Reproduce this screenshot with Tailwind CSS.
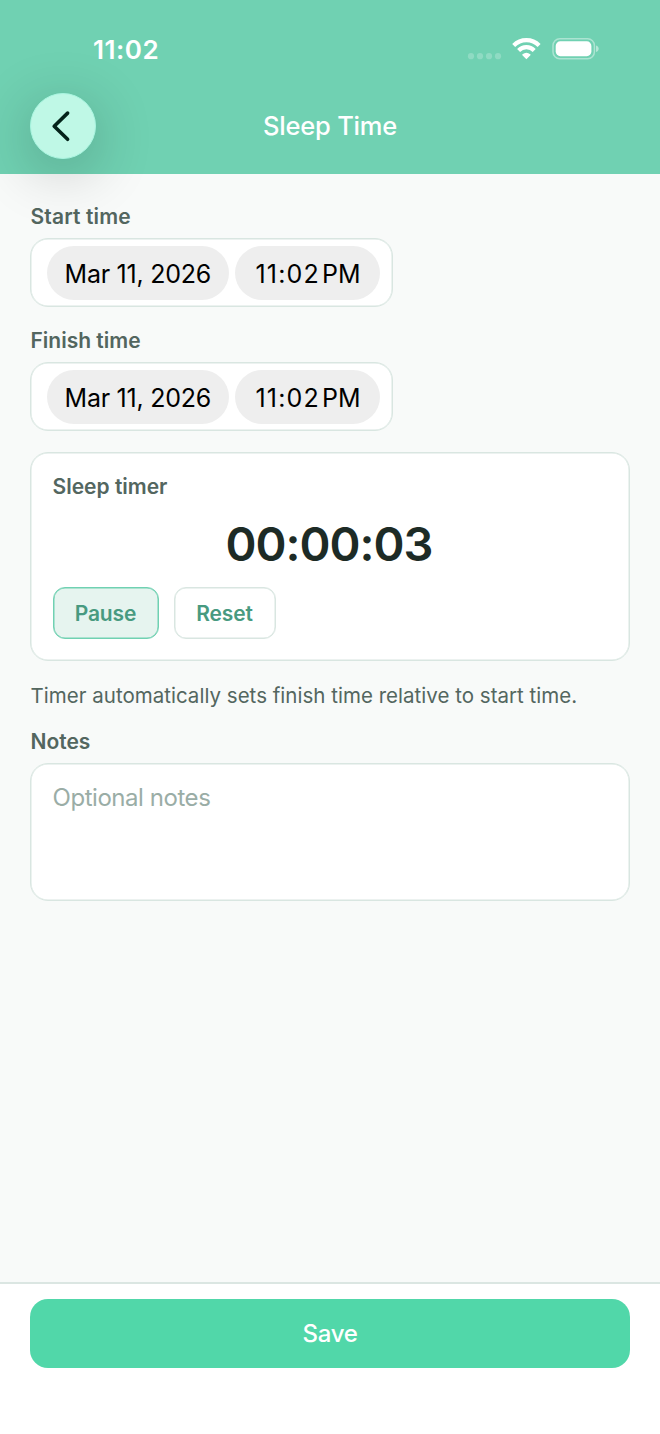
<!DOCTYPE html>
<html lang="en">
<head>
<meta charset="utf-8">
<title>Sleep Time</title>
<script src="https://cdn.jsdelivr.net/npm/@tailwindcss/browser@4"></script>
</head>
<body class="font-['Inter',sans-serif]">
<div class="flex h-[1434px] w-[660px] flex-col overflow-hidden bg-[#f8faf9]">
  <header class="relative z-10 flex h-[174px] flex-col bg-[#70d1b2] text-white">
    <div class="flex h-[93px] items-center justify-between pt-[4px] pr-[61px] pl-[93px]">
      <span class="pt-[2px] text-[26px] font-semibold tracking-[0.5px]">11:02</span>
      <svg class="h-[24px] w-[132px]" viewBox="0 0 132 24" fill="none">
        <g fill="#fff" fill-opacity=".22"><circle cx="4" cy="19.2" r="3.1"/><circle cx="13" cy="19.2" r="3.1"/><circle cx="22" cy="19.2" r="3.1"/><circle cx="31" cy="19.2" r="3.1"/></g>
        <g stroke="#fff" stroke-width="4.2"><path d="M46.7 8.5a17.8 17.8 0 0 1 25.4 0"/><path d="M51.6 13.4a11 11 0 0 1 15.6 0"/></g>
        <path d="M59.4 22.2 55.4 18.2Q55 17.7 55.5 17.3a6 6 0 0 1 7.8 0Q63.8 17.7 63.4 18.2Z" fill="#fff"/>
        <rect x="86" y="1.7" width="41.4" height="20" rx="6.8" stroke="#fff" stroke-opacity=".42" stroke-width="1.5"/>
        <rect x="88.7" y="4.3" width="35.7" height="14.9" rx="4.6" fill="#fff"/>
        <path d="M129 8.5c3.6 1.2 3.6 5.3 0 6.5Z" fill="#fff" fill-opacity=".48"/>
      </svg>
    </div>
    <div class="grid h-[66px] grid-cols-[66px_1fr_66px] items-center px-[30px]">
      <button class="flex size-[66px] items-center justify-center rounded-full border border-[#a9f5e0] bg-[#bff8e6] shadow-[0_12px_60px_rgba(0,0,0,0.24)]">
        <svg class="size-[32px]" viewBox="0 0 32 32" fill="none" stroke="#04231a" stroke-width="3.6" stroke-linecap="round" stroke-linejoin="round"><path d="M20.6 3.1 7.2 16.2l13.4 13.1"/></svg>
      </button>
      <h1 class="text-center text-[25.5px] leading-[30px] font-medium tracking-[-0.2px]">Sleep Time</h1>
    </div>
  </header>

  <main class="flex flex-1 flex-col px-[30px] pt-[30px] text-[#53665f]">
    <label class="h-[26px] pl-[0.5px] text-[21px] leading-[26px] font-semibold tracking-[0.15px]">Start time</label>
    <div class="mt-[8px] flex h-[69px] w-[363px] items-center gap-[6px] rounded-[18px] border border-[#d9e6e1] bg-white pt-px pl-[15.5px] text-[25px] text-black shadow-[inset_0_0_0_0.5px_#d9e6e1]">
      <span class="flex h-[54px] w-[182.5px] items-center justify-center rounded-full bg-[#eeeeee] pt-[3px] tracking-[-0.25px]">Mar 11, 2026</span>
      <span class="flex h-[54px] w-[145px] items-center justify-center rounded-full bg-[#eeeeee] pt-[3px] pl-px"><span class="tracking-[1.2px]">11:02</span><span class="ml-[2px]">PM</span></span>
    </div>
    <label class="mt-[21px] h-[26px] pl-[0.5px] text-[21px] leading-[26px] font-semibold">Finish time</label>
    <div class="mt-[8px] flex h-[69px] w-[363px] items-center gap-[6px] rounded-[18px] border border-[#d9e6e1] bg-white pt-px pl-[15.5px] text-[25px] text-black shadow-[inset_0_0_0_0.5px_#d9e6e1]">
      <span class="flex h-[54px] w-[182.5px] items-center justify-center rounded-full bg-[#eeeeee] pt-[3px] tracking-[-0.25px]">Mar 11, 2026</span>
      <span class="flex h-[54px] w-[145px] items-center justify-center rounded-full bg-[#eeeeee] pt-[3px] pl-px"><span class="tracking-[1.2px]">11:02</span><span class="ml-[2px]">PM</span></span>
    </div>
    <section class="mt-[21px] flex h-[209px] flex-col rounded-[18px] border border-[#d9e6e1] bg-white px-[21.5px] pt-[21px] shadow-[inset_0_0_0_0.5px_#d9e6e1]">
      <h2 class="h-[26px] text-[21px] leading-[26px] font-semibold">Sleep timer</h2>
      <div class="mt-[15px] h-[58px] pr-[2px] text-center text-[47px] leading-[57px] font-semibold tracking-[-1px] text-[#1d2b26]">00:00:03</div>
      <div class="mt-[14px] flex gap-[15px] text-[21px] font-semibold tracking-[-0.1px] text-[#489a80]">
        <button class="h-[52px] w-[106px] rounded-[12px] border border-[#70d1b2] bg-[#e6f4ef] pt-px shadow-[inset_0_0_0_0.5px_#70d1b2]">Pause</button>
        <button class="h-[52px] w-[102px] rounded-[12px] border border-[#d9e6e1] bg-white pt-px shadow-[inset_0_0_0_0.5px_#d9e6e1]">Reset</button>
      </div>
    </section>
    <p class="mt-[21px] h-[26px] pl-[0.5px] text-[20.5px] leading-[27px] tracking-[0.02px] whitespace-nowrap">Timer automatically sets finish time relative to start time.</p>
    <label class="mt-[21px] h-[26px] pl-[0.5px] text-[21px] leading-[26px] font-semibold">Notes</label>
    <div class="mt-[8px] h-[138px] rounded-[18px] border border-[#d9e6e1] bg-white px-[21.5px] pt-[19px] text-[24px] leading-[30px] tracking-[-0.45px] text-[#9aada6] shadow-[inset_0_0_0_0.5px_#d9e6e1]">Optional notes</div>
  </main>

  <footer class="h-[152px] border-t-2 border-[#dbe6e2] bg-white px-[30px] pt-[15px]">
    <button class="block h-[69px] w-full rounded-[18px] bg-[#51d7a9] text-[24px] font-medium tracking-[-0.3px] text-white">Save</button>
  </footer>
</div>
</body>
</html>
